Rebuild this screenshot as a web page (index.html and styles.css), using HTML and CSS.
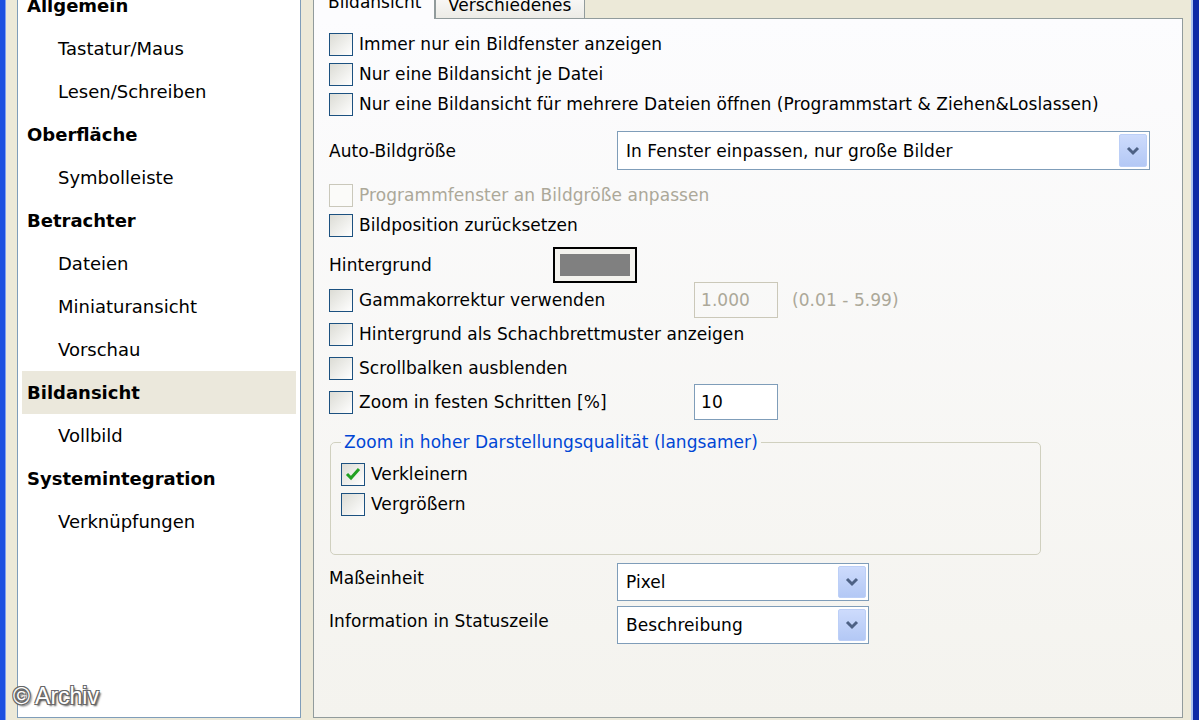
FILE: index.html
```html
<!DOCTYPE html>
<html lang="de">

<head>
    <meta charset="UTF-8">
    <title>Einstellungen - Bildansicht</title>
    <link rel="stylesheet" href="styles.css">
</head>

<body>
    <div class="window">
        <ul class="nav">
            <li class="cat">Allgemein</li>
            <li class="sub">Tastatur/Maus</li>
            <li class="sub">Lesen/Schreiben</li>
            <li class="cat">Oberfläche</li>
            <li class="sub">Symbolleiste</li>
            <li class="cat">Betrachter</li>
            <li class="sub">Dateien</li>
            <li class="sub">Miniaturansicht</li>
            <li class="sub">Vorschau</li>
            <li class="cat selected">Bildansicht</li>
            <li class="sub">Vollbild</li>
            <li class="cat">Systemintegration</li>
            <li class="sub">Verknüpfungen</li>
        </ul>

        <div class="options">
            <div class="tabs">
                <div class="tab active">Bildansicht</div>
                <div class="tab">Verschiedenes</div>
            </div>

            <div class="page">
                <div class="row">
                    <label class="check"><span class="box"></span>Immer nur ein Bildfenster anzeigen</label>
                </div>
                <div class="row">
                    <label class="check"><span class="box"></span>Nur eine Bildansicht je Datei</label>
                </div>
                <div class="row">
                    <label class="check"><span class="box"></span>Nur eine Bildansicht für mehrere Dateien öffnen (Programmstart &amp; Ziehen&amp;Loslassen)</label>
                </div>

                <div class="row combo-row auto">
                    <span class="label">Auto-Bildgröße</span>
                    <div class="combo wide">
                        <span>In Fenster einpassen, nur große Bilder</span>
                        <span class="arrow"><svg width="14" height="10" viewBox="0 0 14 10"><path d="M2 2 L7 7 L12 2" stroke="#4d6185" stroke-width="3" fill="none"/></svg></span>
                    </div>
                </div>

                <div class="row disabled-row">
                    <label class="check disabled"><span class="box"></span>Programmfenster an Bildgröße anpassen</label>
                </div>
                <div class="row">
                    <label class="check"><span class="box"></span>Bildposition zurücksetzen</label>
                </div>

                <div class="row colour-row">
                    <span class="label short">Hintergrund</span>
                    <div class="swatch-btn"><div class="swatch"></div></div>
                </div>

                <div class="row tall">
                    <label class="check fixed"><span class="box"></span>Gammakorrektur verwenden</label>
                    <div class="edit off">1.000</div>
                    <span class="range">(0.01 - 5.99)</span>
                </div>
                <div class="row tall">
                    <label class="check"><span class="box"></span>Hintergrund als Schachbrettmuster anzeigen</label>
                </div>
                <div class="row tall">
                    <label class="check"><span class="box"></span>Scrollbalken ausblenden</label>
                </div>
                <div class="row tall">
                    <label class="check fixed"><span class="box"></span>Zoom in festen Schritten [%]</label>
                    <div class="edit">10</div>
                </div>

                <fieldset class="group">
                    <legend>Zoom in hoher Darstellungsqualität (langsamer)</legend>
                    <div class="row">
                        <label class="check"><span class="box on"><svg width="18" height="16" viewBox="0 0 18 16"><path d="M3 8 L7 12 L15 3" stroke="#21a121" stroke-width="3" fill="none"/></svg></span>Verkleinern</label>
                    </div>
                    <div class="row">
                        <label class="check"><span class="box"></span>Vergrößern</label>
                    </div>
                </fieldset>

                <div class="row combo-row unit">
                    <span class="label raised">Maßeinheit</span>
                    <div class="combo narrow">
                        <span>Pixel</span>
                        <span class="arrow"><svg width="14" height="10" viewBox="0 0 14 10"><path d="M2 2 L7 7 L12 2" stroke="#4d6185" stroke-width="3" fill="none"/></svg></span>
                    </div>
                </div>
                <div class="row combo-row status">
                    <span class="label raised">Information in Statuszeile</span>
                    <div class="combo narrow">
                        <span>Beschreibung</span>
                        <span class="arrow"><svg width="14" height="10" viewBox="0 0 14 10"><path d="M2 2 L7 7 L12 2" stroke="#4d6185" stroke-width="3" fill="none"/></svg></span>
                    </div>
                </div>
            </div>
        </div>

        <div class="watermark">© Archiv</div>
    </div>
</body>

</html>
```

FILE: styles.css
```css
body {
    margin: 0;
    overflow: hidden;
    background-color: #ece9d8;
    font-family: "DejaVu Sans", sans-serif;
    font-size: 17px;
    color: #000;
}

.window {
    position: relative;
    display: flex;
    align-items: flex-start;
    box-sizing: border-box;
    width: 1199px;
    height: 720px;
    overflow: hidden;
    padding-left: 12px;
    background-color: #ece9d8;
    border-left: 5px solid #1d50e0;
    border-right: 6px solid #0c2aa6;
    box-shadow: inset -2px 0 0 #a9c1f0, inset 1px 0 0 #7fa0f0;
}

/* left category list */

.nav {
    list-style: none;
    box-sizing: border-box;
    width: 284px;
    height: 738px;
    margin: -20px 12px 0 0;
    padding: 3px 4px 0;
    background: #fff;
    border: 1px solid #7f9db9;
    font-size: 18px;
    flex: none;
}

.nav li {
    height: 43px;
    line-height: 43px;
    white-space: nowrap;
}

.nav .cat {
    font-weight: bold;
    padding-left: 5px;
}

.nav .sub {
    padding-left: 36px;
}

.nav .selected {
    background-color: #ebe8dc;
}

/* tab control */

.options {
    width: 870px;
    margin-top: -14px;
    flex: none;
}

.tabs {
    display: flex;
    align-items: flex-end;
    height: 32px;
}

.tab {
    box-sizing: border-box;
    height: 29px;
    width: 150px;
    padding-left: 12px;
    line-height: 30px;
    border: 1px solid #919b9c;
    border-bottom: none;
    border-radius: 3px 3px 0 0;
    background: linear-gradient(#fefefe, #ecebe6);
    white-space: nowrap;
}

.tab.active {
    position: relative;
    z-index: 1;
    width: 122px;
    height: 33px;
    margin-bottom: -1px;
    padding-left: 14px;
    line-height: 30px;
    background: #fcfcfe;
}

.page {
    box-sizing: border-box;
    height: 700px;
    padding: 10px 15px 0;
    border: 1px solid #919b9c;
    background: linear-gradient(#fcfcfe, #f4f3ee);
    letter-spacing: 0.06px;
}

.row {
    display: flex;
    align-items: center;
    height: 30px;
    white-space: nowrap;
}

.row.tall {
    height: 34px;
}

.check {
    display: flex;
    align-items: center;
}

.check.fixed {
    width: 365px;
    flex: none;
}

.box {
    box-sizing: border-box;
    width: 24px;
    height: 23px;
    margin-right: 6px;
    border: 1px solid #1c5180;
    background: linear-gradient(135deg, #dcdcd5, #fff);
    display: flex;
    align-items: center;
    justify-content: center;
    flex: none;
}

.check.disabled {
    color: #aca899;
}

.check.disabled .box {
    border-color: #cac8bb;
    background: #fbfbf9;
}

.disabled-row {
    margin-top: 10px;
}

.label {
    width: 288px;
    flex: none;
}

.label.short {
    width: 224px;
}

.label.raised {
    padding-bottom: 8px;
}

.combo-row.auto {
    height: 39px;
    margin-top: 12px;
}

.combo-row.unit {
    height: 38px;
    margin-top: 8px;
}

.combo-row.status {
    height: 38px;
    margin-top: 5px;
}

.combo {
    box-sizing: border-box;
    display: flex;
    align-items: center;
    height: 100%;
    padding-left: 8px;
    border: 1px solid #7f9db9;
    background: #fff;
}

.combo.wide {
    width: 533px;
}

.combo.narrow {
    width: 252px;
}

.arrow {
    box-sizing: border-box;
    display: flex;
    align-items: center;
    justify-content: center;
    width: 28px;
    height: calc(100% - 4px);
    margin: 0 2px 0 auto;
    border: 1px solid #bccff7;
    border-radius: 2px;
    background: linear-gradient(#cddbfc, #b3c8f5);
}

.colour-row {
    height: 36px;
    margin-top: 7px;
}

.swatch-btn {
    box-sizing: border-box;
    width: 84px;
    height: 36px;
    padding: 5px;
    border: 2px solid #000;
    background: #f4f3ee;
}

.swatch {
    height: 100%;
    background: #808080;
}

.edit {
    box-sizing: border-box;
    width: 84px;
    height: 36px;
    line-height: 34px;
    padding-left: 6px;
    border: 1px solid #7f9db9;
    background: #fff;
    flex: none;
}

.edit.off {
    color: #aca899;
    border-color: #cbc8b9;
    background: transparent;
}

.range {
    margin-left: 14px;
    color: #aca899;
}

/* group box */

.group {
    box-sizing: border-box;
    width: 711px;
    margin: 12px 0 0 1px;
    padding: 6px 10px 35px;
    border: 1px solid #d0d0bf;
    border-radius: 5px;
}

.group legend {
    padding: 0 3px;
    line-height: 22px;
    color: #0046d5;
}

.box.on {
    border-color: #1c5180;
}

.watermark {
    position: absolute;
    left: 8px;
    bottom: 10px;
    font-family: "Liberation Sans", sans-serif;
    font-size: 23px;
    color: #fff;
    text-shadow: -1px -1px 0 #666, 1px -1px 0 #666, -1px 1px 0 #666, 1px 1px 0 #666, 2px 2px 2px #444;
}
```
